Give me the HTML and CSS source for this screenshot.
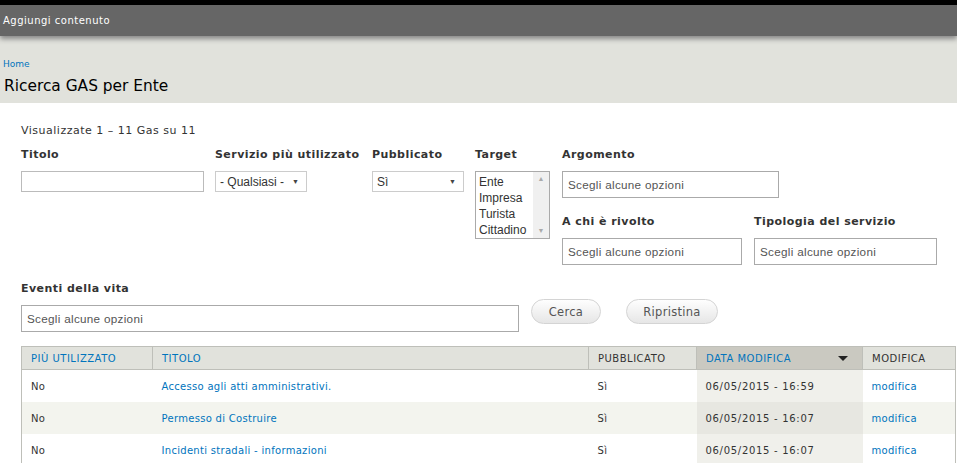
FILE: index.html
```html
<!DOCTYPE html>
<html lang="it">
<head>
<meta charset="utf-8">
<title>Ricerca GAS per Ente</title>
<link rel="stylesheet" href="styles.css">
</head>
<body>
<div class="toolbar"><span class="toolbar-link">Aggiungi contenuto</span></div>
<div class="header">
  <div class="breadcrumb"><a href="#">Home</a></div>
  <h1 class="page-title">Ricerca GAS per Ente</h1>
</div>
<div class="content">
  <div class="summary">Visualizzate 1 – 11 Gas su 11</div>
  <div class="filters">
    <div class="filter f-titolo">
      <label class="flabel">Titolo</label>
      <div class="textbox tb-titolo"></div>
    </div>
    <div class="filter f-servizio">
      <label class="flabel">Servizio più utilizzato</label>
      <div class="select sel-qualsiasi"><span>- Qualsiasi -</span><span class="arrow">▼</span></div>
    </div>
    <div class="filter f-pubblicato">
      <label class="flabel">Pubblicato</label>
      <div class="select sel-si"><span>Sì</span><span class="arrow">▼</span></div>
    </div>
    <div class="filter f-target">
      <label class="flabel">Target</label>
      <div class="listbox">
        <div class="options">
          <div>Ente</div><div>Impresa</div><div>Turista</div><div>Cittadino</div>
        </div>
        <div class="scrollbar"><span class="sarrow">▲</span><span class="sarrow">▼</span></div>
      </div>
    </div>
    <div class="filter-col">
      <div class="filter">
        <label class="flabel">Argomento</label>
        <div class="chosen ch-argomento">Scegli alcune opzioni</div>
      </div>
      <div class="filter-row">
        <div class="filter f-achi">
          <label class="flabel">A chi è rivolto</label>
          <div class="chosen ch-achi">Scegli alcune opzioni</div>
        </div>
        <div class="filter">
          <label class="flabel">Tipologia del servizio</label>
          <div class="chosen ch-tipologia">Scegli alcune opzioni</div>
        </div>
      </div>
    </div>
  </div>
  <div class="filters2">
    <div class="filter f-eventi">
      <label class="flabel">Eventi della vita</label>
      <div class="chosen ch-eventi">Scegli alcune opzioni</div>
    </div>
    <button class="btn btn-cerca">Cerca</button>
    <button class="btn btn-ripristina">Ripristina</button>
  </div>
  <table class="results">
    <colgroup>
      <col class="c1"><col class="c2"><col class="c3"><col class="c4"><col class="c5">
    </colgroup>
    <thead>
      <tr>
        <th><a href="#">PIÙ UTILIZZATO</a></th>
        <th><a href="#">TITOLO</a></th>
        <th>PUBBLICATO</th>
        <th class="active"><a href="#">DATA MODIFICA</a><span class="sort"></span></th>
        <th>MODIFICA</th>
      </tr>
    </thead>
    <tbody>
      <tr class="odd">
        <td>No</td><td><a href="#">Accesso agli atti amministrativi.</a></td><td>Sì</td><td class="active date">06/05/2015 - 16:59</td><td><a href="#">modifica</a></td>
      </tr>
      <tr class="even">
        <td>No</td><td><a href="#">Permesso di Costruire</a></td><td>Sì</td><td class="active date">06/05/2015 - 16:07</td><td><a href="#">modifica</a></td>
      </tr>
      <tr class="odd">
        <td>No</td><td><a href="#">Incidenti stradali - informazioni</a></td><td>Sì</td><td class="active date">06/05/2015 - 16:07</td><td><a href="#">modifica</a></td>
      </tr>
    </tbody>
  </table>
</div>
</body>
</html>
```
FILE: styles.css
```css
html, body {
  margin: 0;
  padding: 0;
  background: #fff;
  font-family: "DejaVu Sans", Verdana, sans-serif;
  color: #333;
  overflow: hidden;
}
a { color: #0074bd; text-decoration: none; }

.toolbar {
  border-top: 5px solid #000;
  background: #666;
  height: 31px;
  display: flex;
  align-items: center;
  padding-left: 3px;
  box-shadow: 0 3px 5px #888;
  position: relative;
}
.toolbar-link {
  color: #fff;
  font-size: 10px;
  letter-spacing: 0.5px;
}

.header {
  background: #e1e2dc;
  height: 67px;
  padding-left: 3px;
  display: flex;
  flex-direction: column;
}
.breadcrumb {
  font-size: 9px;
  margin-top: 22px;
  height: 12px;
  line-height: 12px;
}
.page-title {
  margin: 6px 0 0 1px;
  font-weight: normal;
  font-size: 15.4px;
  color: #000;
  line-height: 20px;
}

.content {
  padding: 0 0 0 21px;
}
.summary {
  font-size: 11px;
  letter-spacing: 0.5px;
  color: #333;
  margin-top: 21px;
  line-height: 14px;
}

.filters {
  display: flex;
  margin-top: 10px;
}
.filter {
  display: flex;
  flex-direction: column;
}
.flabel {
  font-weight: bold;
  font-size: 11px;
  letter-spacing: 0.45px;
  color: #333;
  line-height: 14px;
  height: 14px;
  margin-bottom: 9px;
  white-space: nowrap;
}
.f-titolo { width: 194px; }
.f-servizio { width: 157px; }
.f-pubblicato { width: 103px; }
.f-target { width: 87px; }
.filter-col { display: flex; flex-direction: column; }
.filter-row { display: flex; margin-top: 17px; }
.f-achi { width: 192px; }

.textbox {
  border: 1px solid #bbb;
  box-sizing: border-box;
  height: 21px;
  background: #fff;
}
.tb-titolo { width: 183px; }

.select {
  border: 1px solid #ccc;
  box-sizing: border-box;
  height: 21px;
  display: flex;
  align-items: center;
  justify-content: space-between;
  padding: 0 7px 0 4px;
  font-family: "Liberation Sans", Arial, sans-serif;
  font-size: 12px;
  color: #333;
  background: #fff;
}
.select .arrow { font-size: 7px; color: #444; }
.sel-qualsiasi { width: 92px; }
.sel-si { width: 92px; }

.listbox {
  width: 75px;
  height: 68px;
  box-sizing: border-box;
  border: 1px solid #aaa;
  display: flex;
  font-family: "Liberation Sans", Arial, sans-serif;
  font-size: 12px;
  color: #333;
}
.options { flex: 1; padding: 2px 0 0 3px; line-height: 16px; }
.scrollbar {
  width: 16px;
  background: #f0f0f0;
  display: flex;
  flex-direction: column;
  justify-content: space-between;
  align-items: center;
  padding: 2px 0;
}
.sarrow { font-size: 7px; color: #aaa; line-height: 10px; }

.chosen {
  border: 1px solid #aaa;
  box-sizing: border-box;
  height: 27px;
  display: flex;
  align-items: center;
  padding-left: 5px;
  font-family: "Liberation Sans", Arial, sans-serif;
  font-size: 11.7px;
  letter-spacing: 0.3px;
  color: #555;
  background: #fff;
}
.ch-argomento { width: 217px; }
.ch-achi { width: 180px; }
.ch-tipologia { width: 183px; }
.ch-eventi { width: 498px; }

.filters2 {
  display: flex;
  align-items: flex-end;
  margin-top: 17px;
}
.f-eventi { margin-right: 12px; }
.btn {
  border: 1px solid #d4d4d4;
  border-radius: 13px;
  background: linear-gradient(#fefefe, #e6e6e6);
  height: 25px;
  font-family: "DejaVu Sans", Verdana, sans-serif;
  font-size: 11.5px;
  letter-spacing: 0.3px;
  color: #555;
  padding: 0;
  margin-bottom: 8px;
}
.btn-cerca { width: 70px; margin-right: 25px; }
.btn-ripristina { width: 92px; }

.results {
  margin-top: 14px;
  width: 935px;
  border-collapse: collapse;
  border: 1px solid #bebfb9;
  font-size: 10px;
  letter-spacing: 0.35px;
}
col.c1 { width: 131px; }
col.c2 { width: 436px; }
col.c3 { width: 108px; }
col.c4 { width: 166px; }
.results th {
  background: #e1e2dc;
  height: 22px;
  padding: 0 9px;
  text-align: left;
  font-weight: normal;
  color: #333;
  letter-spacing: 0.5px;
  border-left: 1px solid #bebfb9;
  border-bottom: 1px solid #bebfb9;
  white-space: nowrap;
}
.results th.active {
  background: #cac9c1;
  position: relative;
}
.sort {
  position: absolute;
  right: 14px;
  top: 9px;
  width: 0;
  height: 0;
  border-left: 5px solid transparent;
  border-right: 5px solid transparent;
  border-top: 5px solid #222;
}
.results td {
  height: 32px;
  padding: 0 9px;
  color: #333;
  white-space: nowrap;
}
.results td.date { letter-spacing: 0.7px; }
.results td a { letter-spacing: 0.3px; }
.results tr.even td { background: #f3f4ee; }
.results td.active { background: #f0f0eb; }
.results tr.even td.active { background: #e7e7e1; }
```
